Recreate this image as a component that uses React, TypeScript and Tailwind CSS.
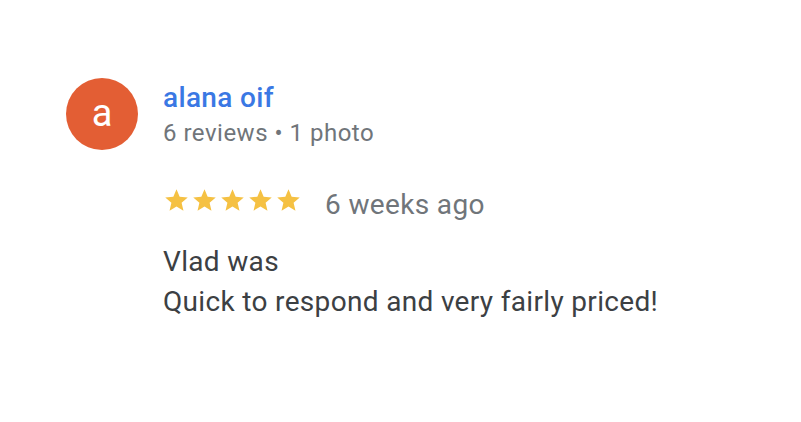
export default function App() {
  const stars = [0, 1, 2, 3, 4];
  return (
    <main className="w-[801px] h-[422px] bg-white font-['Roboto',sans-serif]">
      <div className="flex gap-[25px] pl-[66px] pt-[78px]">
        <div className="flex h-[72px] w-[72px] shrink-0 items-center justify-center rounded-full bg-[#e35e34] pb-[2px] text-[38px] text-white">
          a
        </div>
        <div className="flex flex-col">
          <div className="mt-[3px] text-[28px] font-medium leading-[34px] tracking-[0.35px] text-[#3a78e4]">
            alana oif
          </div>
          <div className="mt-[3px] text-[24px] leading-[30px] tracking-[0.5px] text-[#70757a]">
            6 reviews • 1 photo
          </div>
          <div className="mt-[39px] flex items-start">
            <div className="flex gap-[1px]">
              {stars.map((i) => (
                <svg key={i} viewBox="0 0 24 24" className="h-[27px] w-[27px]">
                  <path
                    fill="#f5c143"
                    d="M12 17.27L18.18 21l-1.64-7.03L22 9.24l-7.19-.61L12 2 9.19 8.63 2 9.24l5.46 4.73L5.82 21z"
                  />
                </svg>
              ))}
            </div>
            <span className="ml-[23px] mt-[1px] text-[28px] leading-[34px] tracking-[0.35px] text-[#70757a]">
              6 weeks ago
            </span>
          </div>
          <p className="mt-[20px] text-[28px] leading-[40px] tracking-[0.33px] text-[#3c4043]">
            Vlad was
            <br />
            Quick to respond and very fairly priced!
          </p>
        </div>
      </div>
    </main>
  );
}
